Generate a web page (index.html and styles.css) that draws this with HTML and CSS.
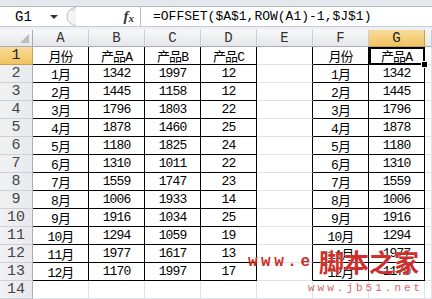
FILE: index.html
```html
<!DOCTYPE html>
<html>
<head>
<meta charset="utf-8">
<link rel="stylesheet" href="styles.css">
</head>
<body>
<div class="fbar">
  <div class="field">
    <div class="namebox"><span class="nb-text">G1</span><span class="nb-arrow"></span></div>
    <div class="grip"><svg width="16" height="19" viewBox="0 0 16 19"><path d="M14 0.5 A 9 9 0 0 0 14 18.5" fill="#f4f4f4" stroke="#b9bdc2" stroke-width="1"/><path d="M9 3.5 Q 11 2.5 13 3" fill="none" stroke="#d5d8dc" stroke-width="1.5"/></svg></div>
    <div class="fx"><span class="fx-f">f</span><span class="fx-x">x</span></div>
    <div class="formula">=OFFSET($A$1,ROW(A1)-1,$J$1)</div>
  </div>
</div>
<div class="sheet">
  <div class="ch corner"><div class="tri"></div></div><div class="ch">A</div><div class="ch">B</div><div class="ch">C</div><div class="ch">D</div><div class="ch">E</div><div class="ch">F</div><div class="ch hl">G</div><div class="ch"></div>

  <div class="rh hl">1</div><div class="c b">月份</div><div class="c b">产品A</div><div class="c b">产品B</div><div class="c b">产品C</div><div class="c e"></div><div class="c b">月份</div><div class="c b sel">产品A<span class="handle"></span></div><div class="c"></div>
  <div class="rh">2</div><div class="c b">1月</div><div class="c b">1342</div><div class="c b">1997</div><div class="c b">12</div><div class="c e"></div><div class="c b">1月</div><div class="c b">1342</div><div class="c"></div>
  <div class="rh">3</div><div class="c b">2月</div><div class="c b">1445</div><div class="c b">1158</div><div class="c b">12</div><div class="c e"></div><div class="c b">2月</div><div class="c b">1445</div><div class="c"></div>
  <div class="rh">4</div><div class="c b">3月</div><div class="c b">1796</div><div class="c b">1803</div><div class="c b">22</div><div class="c e"></div><div class="c b">3月</div><div class="c b">1796</div><div class="c"></div>
  <div class="rh">5</div><div class="c b">4月</div><div class="c b">1878</div><div class="c b">1460</div><div class="c b">25</div><div class="c e"></div><div class="c b">4月</div><div class="c b">1878</div><div class="c"></div>
  <div class="rh">6</div><div class="c b">5月</div><div class="c b">1180</div><div class="c b">1825</div><div class="c b">24</div><div class="c e"></div><div class="c b">5月</div><div class="c b">1180</div><div class="c"></div>
  <div class="rh">7</div><div class="c b">6月</div><div class="c b">1310</div><div class="c b">1011</div><div class="c b">22</div><div class="c e"></div><div class="c b">6月</div><div class="c b">1310</div><div class="c"></div>
  <div class="rh">8</div><div class="c b">7月</div><div class="c b">1559</div><div class="c b">1747</div><div class="c b">23</div><div class="c e"></div><div class="c b">7月</div><div class="c b">1559</div><div class="c"></div>
  <div class="rh">9</div><div class="c b">8月</div><div class="c b">1006</div><div class="c b">1933</div><div class="c b">14</div><div class="c e"></div><div class="c b">8月</div><div class="c b">1006</div><div class="c"></div>
  <div class="rh">10</div><div class="c b">9月</div><div class="c b">1916</div><div class="c b">1034</div><div class="c b">25</div><div class="c e"></div><div class="c b">9月</div><div class="c b">1916</div><div class="c"></div>
  <div class="rh">11</div><div class="c b">10月</div><div class="c b">1294</div><div class="c b">1059</div><div class="c b">19</div><div class="c e"></div><div class="c b">10月</div><div class="c b">1294</div><div class="c"></div>
  <div class="rh">12</div><div class="c b">11月</div><div class="c b">1977</div><div class="c b">1617</div><div class="c b">13</div><div class="c e"></div><div class="c b">11月</div><div class="c b">1977</div><div class="c"></div>
  <div class="rh">13</div><div class="c b">12月</div><div class="c b">1170</div><div class="c b">1997</div><div class="c b">17</div><div class="c e"></div><div class="c b">12月</div><div class="c b">1170</div><div class="c"></div>
  <div class="rh">14</div><div class="c"></div><div class="c"></div><div class="c"></div><div class="c"></div><div class="c"></div><div class="c"></div><div class="c"></div><div class="c"></div>
</div>
<div class="wm wm-www">www.e</div>
<div class="wm wm-cn">脚本之家</div>
<div class="wm wm-url">www.jb51.net</div>
</body>
</html>
```
FILE: styles.css
```css
html, body {
  margin: 0;
  padding: 0;
}
body {
  width: 432px;
  height: 299px;
  overflow: hidden;
  background: #fff;
  font-family: "Liberation Mono", "Noto Sans CJK SC", monospace;
  position: relative;
}
.fbar {
  height: 30px;
  box-sizing: border-box;
  padding-top: 6px;
  background: linear-gradient(#e3e6ea, #eef0f3);
}
.field {
  height: 21px;
  box-sizing: border-box;
  background: #fff;
  border-top: 1px solid #b6bcc4;
  border-bottom: 1px solid #c9cdd3;
  display: flex;
  align-items: center;
}
.namebox {
  width: 62px;
  height: 100%;
  display: flex;
  align-items: center;
}
.nb-text {
  font-size: 14px;
  color: #000;
  padding-left: 15px;
  width: 33px;
}
.nb-arrow {
  width: 0;
  height: 0;
  border-left: 4px solid transparent;
  border-right: 4px solid transparent;
  border-top: 4px solid #333;
  margin-left: 2px;
}
.grip {
  width: 20px;
  height: 100%;
  display: flex;
  align-items: center;
}
.fx {
  width: 59px;
  height: 100%;
  box-sizing: border-box;
  border-right: 1px solid #b8bdc4;
  display: flex;
  align-items: center;
  justify-content: flex-end;
  padding-right: 6px;
  font-family: "Liberation Serif", serif;
  font-style: italic;
  font-weight: bold;
  color: #333;
}
.fx-f {
  font-size: 15px;
}
.fx-x {
  font-size: 11px;
  margin-top: 3px;
}
.formula {
  padding-left: 12px;
  font-size: 13px;
  color: #000;
  white-space: nowrap;
}
.sheet {
  display: grid;
  grid-template-columns: 33px repeat(7, 56px) 7px;
  grid-template-rows: 17px repeat(14, 18px);
}
.sheet > div {
  box-sizing: border-box;
  display: flex;
  align-items: center;
  justify-content: center;
  white-space: nowrap;
  overflow: hidden;
}
.ch {
  background: linear-gradient(#f7f8f9, #e4e6e9);
  border-right: 1px solid #c8ccd1;
  border-bottom: 1px solid #a9aeb5;
  font-size: 14px;
  color: #333;
}
.corner {
  justify-content: flex-end !important;
  align-items: flex-end !important;
  padding: 0 3px 3px 0;
  border-right-color: #a9aeb5;
}
.tri {
  width: 0;
  height: 0;
  border-left: 9px solid transparent;
  border-bottom: 9px solid #b7bcc3;
}
.rh {
  background: linear-gradient(90deg, #f1f2f4, #e7e9ec);
  border-right: 1px solid #a9aeb5;
  border-bottom: 1px solid #cdd1d6;
  font-size: 15px;
  color: #444;
}
.ch.hl, .rh.hl {
  background: linear-gradient(#f9dc9c, #f1c35f);
  border-right-color: #c2a05a;
  border-bottom-color: #c2a05a;
  color: #222;
}
.c {
  border-right: 1px solid #dfe2e6;
  border-bottom: 1px solid #dfe2e6;
  font-size: 13px;
  color: #000;
  letter-spacing: -0.9px;
}
.c.b {
  border-right-color: #000;
  border-bottom-color: #000;
}
.c.e {
  border-right-color: #000;
}
.sheet > .sel {
  position: relative;
  overflow: visible;
  outline: 2px solid #000;
  outline-offset: -2px;
}
.handle {
  position: absolute;
  right: -4px;
  bottom: -4px;
  width: 5px;
  height: 5px;
  background: #000;
  border: 1px solid #fff;
  z-index: 2;
}
.wm {
  position: absolute;
  white-space: nowrap;
}
.wm-www {
  left: 248px;
  top: 253px;
  font-family: "Liberation Mono", monospace;
  font-weight: bold;
  font-size: 16px;
  letter-spacing: 3.5px;
  color: #c8302c;
}
.wm-cn {
  left: 319px;
  top: 246px;
  font-family: "Noto Sans CJK SC", sans-serif;
  font-weight: bold;
  font-size: 25px;
  line-height: 30px;
  color: #cf2f2a;
  text-shadow: 0 0 1px #fff;
}
.wm-url {
  left: 308px;
  top: 282px;
  font-family: "Liberation Mono", monospace;
  font-size: 11px;
  letter-spacing: 3px;
  color: #d36a6a;
}
```
